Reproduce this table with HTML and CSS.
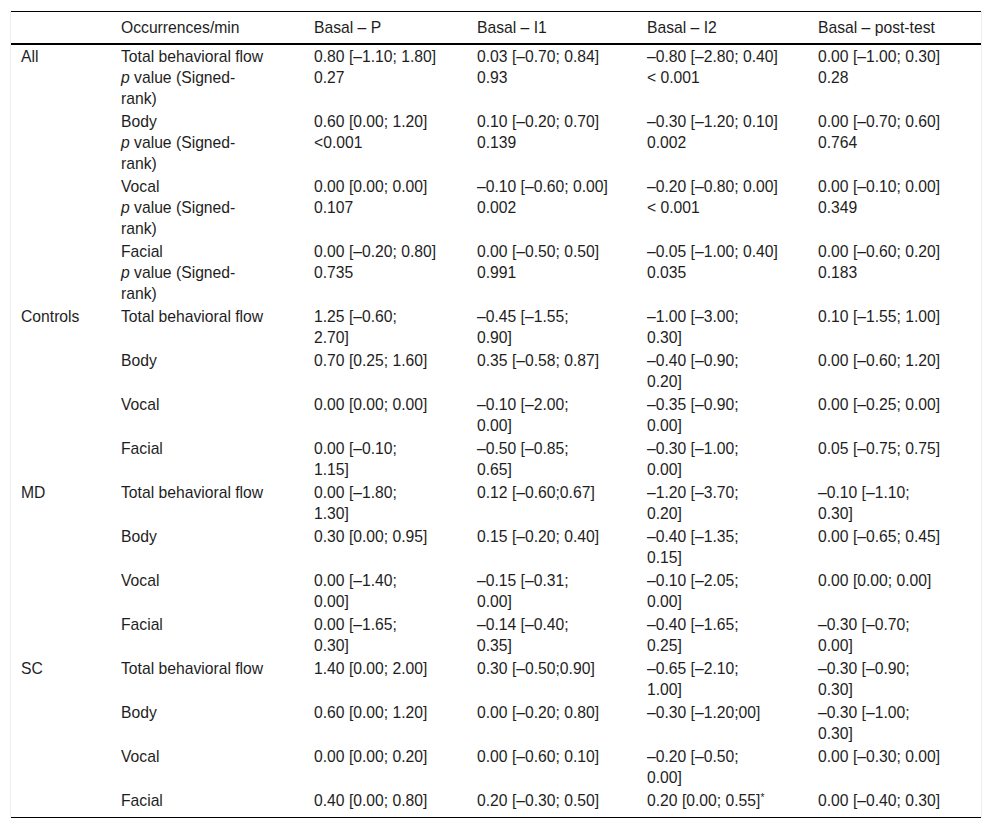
FILE: index.html
```html
<!DOCTYPE html>
<html lang="en">
<head>
<meta charset="utf-8">
<title>Table</title>
<link rel="stylesheet" href="styles.css">
</head>
<body>
<div class="frame">
<table class="data">
<colgroup>
<col class="c1"><col class="c2"><col class="c3"><col class="c4"><col class="c5"><col class="c6">
</colgroup>
<thead>
<tr><th></th><th>Occurrences/min</th><th>Basal – P</th><th>Basal – I1</th><th>Basal – I2</th><th>Basal – post-test</th></tr>
</thead>
<tbody>
<tr><td rowspan="4">All</td><td>Total behavioral flow<br><i>p</i> value (Signed-rank)</td><td class="nw">0.80 [–1.10; 1.80]<br>0.27</td><td class="nw">0.03 [–0.70; 0.84]<br>0.93</td><td class="nw">–0.80 [–2.80; 0.40]<br>&lt; 0.001</td><td class="nw">0.00 [–1.00; 0.30]<br>0.28</td></tr>
<tr><td>Body<br><i>p</i> value (Signed-rank)</td><td class="nw">0.60 [0.00; 1.20]<br>&lt;0.001</td><td class="nw">0.10 [–0.20; 0.70]<br>0.139</td><td class="nw">–0.30 [–1.20; 0.10]<br>0.002</td><td class="nw">0.00 [–0.70; 0.60]<br>0.764</td></tr>
<tr><td>Vocal<br><i>p</i> value (Signed-rank)</td><td class="nw">0.00 [0.00; 0.00]<br>0.107</td><td class="nw">–0.10 [–0.60; 0.00]<br>0.002</td><td class="nw">–0.20 [–0.80; 0.00]<br>&lt; 0.001</td><td class="nw">0.00 [–0.10; 0.00]<br>0.349</td></tr>
<tr><td>Facial<br><i>p</i> value (Signed-rank)</td><td class="nw">0.00 [–0.20; 0.80]<br>0.735</td><td class="nw">0.00 [–0.50; 0.50]<br>0.991</td><td class="nw">–0.05 [–1.00; 0.40]<br>0.035</td><td class="nw">0.00 [–0.60; 0.20]<br>0.183</td></tr>

<tr><td rowspan="4">Controls</td><td>Total behavioral flow</td><td>1.25 [–0.60; 2.70]</td><td>–0.45 [–1.55; 0.90]</td><td>–1.00 [–3.00; 0.30]</td><td>0.10 [–1.55; 1.00]</td></tr>
<tr><td>Body</td><td>0.70 [0.25; 1.60]</td><td>0.35 [–0.58; 0.87]</td><td>–0.40 [–0.90; 0.20]</td><td>0.00 [–0.60; 1.20]</td></tr>
<tr><td>Vocal</td><td>0.00 [0.00; 0.00]</td><td>–0.10 [–2.00; 0.00]</td><td>–0.35 [–0.90; 0.00]</td><td>0.00 [–0.25; 0.00]</td></tr>
<tr><td>Facial</td><td>0.00 [–0.10; 1.15]</td><td>–0.50 [–0.85; 0.65]</td><td>–0.30 [–1.00; 0.00]</td><td>0.05 [–0.75; 0.75]</td></tr>

<tr><td rowspan="4">MD</td><td>Total behavioral flow</td><td>0.00 [–1.80; 1.30]</td><td>0.12 [–0.60;0.67]</td><td>–1.20 [–3.70; 0.20]</td><td>–0.10 [–1.10; 0.30]</td></tr>
<tr><td>Body</td><td>0.30 [0.00; 0.95]</td><td>0.15 [–0.20; 0.40]</td><td>–0.40 [–1.35; 0.15]</td><td>0.00 [–0.65; 0.45]</td></tr>
<tr><td>Vocal</td><td>0.00 [–1.40; 0.00]</td><td>–0.15 [–0.31; 0.00]</td><td>–0.10 [–2.05; 0.00]</td><td>0.00 [0.00; 0.00]</td></tr>
<tr><td>Facial</td><td>0.00 [–1.65; 0.30]</td><td>–0.14 [–0.40; 0.35]</td><td>–0.40 [–1.65; 0.25]</td><td>–0.30 [–0.70; 0.00]</td></tr>

<tr><td rowspan="4" class="end">SC</td><td>Total behavioral flow</td><td>1.40 [0.00; 2.00]</td><td>0.30 [–0.50;0.90]</td><td>–0.65 [–2.10; 1.00]</td><td>–0.30 [–0.90; 0.30]</td></tr>
<tr><td>Body</td><td>0.60 [0.00; 1.20]</td><td>0.00 [–0.20; 0.80]</td><td>–0.30 [–1.20;00]</td><td>–0.30 [–1.00; 0.30]</td></tr>
<tr><td>Vocal</td><td>0.00 [0.00; 0.20]</td><td>0.00 [–0.60; 0.10]</td><td>–0.20 [–0.50; 0.00]</td><td>0.00 [–0.30; 0.00]</td></tr>
<tr class="last"><td>Facial</td><td>0.40 [0.00; 0.80]</td><td>0.20 [–0.30; 0.50]</td><td>0.20 [0.00; 0.55]<span class="ast">*</span></td><td>0.00 [–0.40; 0.30]</td></tr>
</tbody>
</table>
</div>
</body>
</html>
```

FILE: styles.css
```css
html, body {
  margin: 0;
  padding: 0;
  background: #ffffff;
}

body {
  font-family: "Liberation Sans", Arial, sans-serif;
  font-size: 15.7px;
  line-height: 21px;
  color: #1e1e1e;
}

.frame {
  margin: 11px 10px 0 10px;
  border-left: 1px solid #ededed;
  border-right: 1px solid #ededed;
}

.data {
  width: 100%;
  table-layout: fixed;
  border-collapse: separate;
  border-spacing: 0;
}

.c1 { width: 100px; }
.c2 { width: 193px; }
.c3 { width: 163px; }
.c4 { width: 170px; }
.c5 { width: 171px; }
.c6 { width: 173px; }

.data th {
  font-weight: normal;
  text-align: left;
  vertical-align: top;
  padding: 5px 34px 5px 10px;
  border-top: 1px solid #000;
  border-bottom: 2px solid #000;
}

.data td {
  text-align: left;
  vertical-align: top;
  padding: 1px 34px 1px 10px;
}

.data td.nw {
  white-space: nowrap;
}

.data tbody tr.last td {
  padding-bottom: 6px;
  border-bottom: 1px solid #000;
}

.data td.end {
  padding-bottom: 6px;
  border-bottom: 1px solid #000;
}

.ast {
  font-size: 0.65em;
  line-height: 0;
  vertical-align: 0.45em;
}
```
